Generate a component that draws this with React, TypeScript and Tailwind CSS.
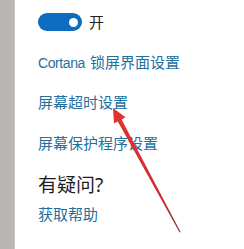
import React from "react";

const link = "text-[15px] leading-[20px] text-[#23709f]";

export default function App() {
  return (
    <div
      className="relative flex h-[249px] w-[244px] overflow-hidden bg-white"
      style={{ fontFamily: '"Noto Sans", "Noto Sans CJK SC", sans-serif' }}
    >
      <div className="w-[15px] shrink-0 border-r border-[#c9c8c4] bg-[#b8b7b3]" />
      <div className="flex flex-col pl-[23px] pt-[13px]">
        <div className="flex items-center gap-[7px]">
          <div className="flex h-[18px] w-[44px] items-center justify-end rounded-full bg-[#0b6cc0] pr-[4px]">
            <div className="h-[9px] w-[9px] rounded-full bg-white" />
          </div>
          <span className="text-[15px] leading-[18px] text-[#222]">开</span>
        </div>
        <div className={`${link} mt-[21px]`}>
          <span className="mr-[5px] font-['Liberation_Sans'] text-[14px] tracking-[-0.4px]">Cortana</span>
          锁屏界面设置
        </div>
        <div className={`${link} mt-[19px]`}>屏幕超时设置</div>
        <div className={`${link} mt-[21px]`}>屏幕保护程序设置</div>
        <div className="mt-[20px] text-[19px] leading-[24px] text-[#1d1d1d]">有疑问?</div>
        <div className={`${link} mt-[7px]`}>获取帮助</div>
      </div>
      <svg className="pointer-events-none absolute left-0 top-0" width="244" height="249" viewBox="0 0 244 249">
        <defs>
          <linearGradient id="ar" x1="113" y1="108" x2="180" y2="232" gradientUnits="userSpaceOnUse">
            <stop offset="0" stopColor="#e2332f" />
            <stop offset="0.7" stopColor="#d42a2c" />
            <stop offset="1" stopColor="#7a3a48" />
          </linearGradient>
        </defs>
        <polygon
          points="113,108 125.5,117.3 121.6,119.6 180.6,232 179.6,232.4 117.8,121.4 114,123.4"
          fill="url(#ar)"
        />
      </svg>
    </div>
  );
}
